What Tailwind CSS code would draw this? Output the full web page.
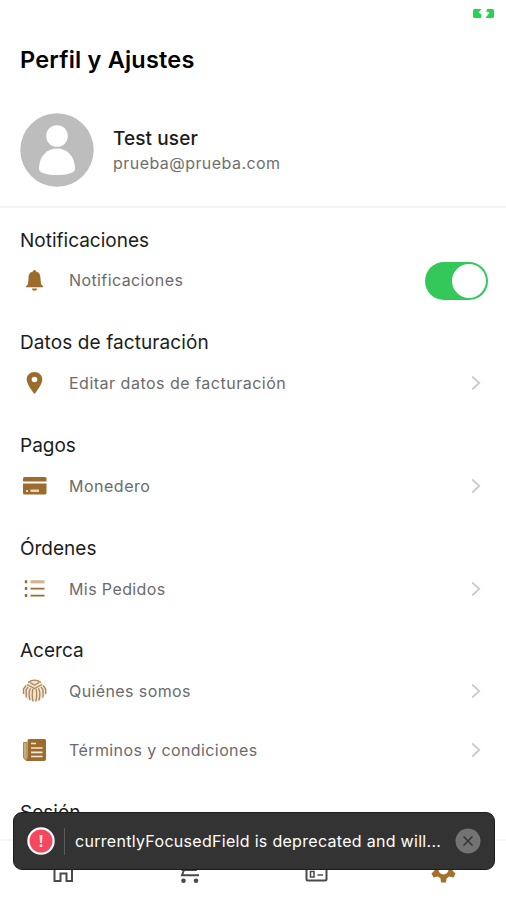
<!DOCTYPE html>
<html lang="es">
<head>
    <meta charset="UTF-8">
    <meta name="viewport" content="width=device-width, initial-scale=1.0">
    <title>Perfil y Ajustes</title>
    <script src="https://cdn.jsdelivr.net/npm/@tailwindcss/browser@4"></script>
</head>
<body class="bg-white font-['Inter',sans-serif] text-[#1c1c1c]">
<div class="relative w-[506px] h-[900px] overflow-hidden flex flex-col">

    <!-- Status bar -->
    <div class="h-[26px] shrink-0 flex justify-end items-center pr-3">
        <svg class="w-[21px] h-[9px]" viewBox="0 0 21 9" fill="#27d353">
            <path d="M1.500 0H8.500L5.500 3.500L8.500 5.500L8 9H1.500Q0 9 0 7.500V1.500Q0 0 1.500 0Z" />
            <path d="M14 0H19.500Q21 0 21 1.500V7.500Q21 9 19.500 9H12.500L16.500 3.500L13.500 3Z" />
        </svg>
    </div>

    <!-- Header -->
    <header class="h-[182px] shrink-0 border-b-2 border-[#f4f4f4] px-5 pt-[18px]">
        <h1 class="text-[23.500px] leading-8 font-semibold text-black tracking-[0.200px]">Perfil y Ajustes</h1>
        <div class="flex items-center mt-[37px]">
            <svg class="w-[74px] h-[74px] mr-[19px]" viewBox="0 0 74 74">
                <circle cx="37" cy="37" r="36.700" fill="#bdbdbd" />
                <circle cx="37" cy="23" r="10.800" fill="#fff" />
                <path d="M19 56C19 43 27 35.500 37 35.500S55 43 55 56C55 64 19 64 19 56Z" fill="#fff" />
            </svg>
            <div>
                <p class="text-[19px] leading-[26px] font-medium tracking-[0.1px]">Test user</p>
                <p class="text-base leading-6 -mt-px text-[#6f6f6f] tracking-[0.450px]">prueba@prueba.com</p>
            </div>
        </div>
    </header>

    <!-- Ajustes -->
    <main class="flex-1 min-h-0 overflow-hidden">
        <section>
            <h2 class="h-11 pt-[20.600px] pl-5 text-[19px] leading-6">Notificaciones</h2>
            <div class="h-[58.700px] flex items-center pl-5 pr-[18px]">
                <svg class="w-[30px] h-[30px] mr-[19px]" viewBox="0 0 30 30" fill="#9c6c2e">
                    <path d="M14.500 4C15.500 4 16 4.800 16 5.600C19.500 6.400 20.500 9 20.500 12.500L21 18L23.200 20.500V21.200H6V20.500L8 18L8.500 12.500C8.500 9 9.500 6.400 13 5.600C13 4.800 13.500 4 14.500 4Z" />
                    <path d="M12 22.500H17C17 25.500 12 25.500 12 22.500Z" />
                </svg>
                <span class="flex-1 text-base pb-0.5 text-[#6b6b6b] tracking-[0.4px]">Notificaciones</span>
                <span class="w-[63px] h-[38px] rounded-full bg-[#34c759] flex items-center justify-end pr-[2px]">
                    <span class="size-[34px] rounded-full bg-white"></span>
                </span>
            </div>
        </section>

        <section>
            <h2 class="h-11 pt-[20.600px] pl-5 text-[19px] leading-6 tracking-[0.100px]">Datos de facturación</h2>
            <div class="h-[58.700px] flex items-center pl-5 pr-[25px] pb-0.5">
                <svg class="w-[30px] h-[30px] mr-[19px]" viewBox="0 0 30 30" fill="#9c6c2e">
                    <path fill-rule="evenodd" d="M14.500 4C19 4 22.300 7.200 22.300 11.500C22.300 17 14.500 26 14.500 26S6.700 17 6.700 11.500C6.700 7.200 10 4 14.500 4ZM14.500 8.700A2.800 2.800 0 1 0 14.500 14.300A2.800 2.800 0 1 0 14.500 8.700Z" />
                </svg>
                <span class="flex-1 text-base text-[#6b6b6b] tracking-[0.500px]">Editar datos de facturación</span>
                <svg class="w-[10px] h-4" viewBox="0 0 10 16" fill="none" stroke="#cccccc" stroke-width="1.900"><path d="M1.200 1.500L8.200 8L1.200 14.500" /></svg>
            </div>
        </section>

        <section>
            <h2 class="h-11 pt-[20.600px] pl-5 text-[19px] leading-6">Pagos</h2>
            <div class="h-[58.700px] flex items-center pl-5 pr-[25px] pb-px">
                <svg class="w-[30px] h-[30px] mr-[19px]" viewBox="0 0 30 30" fill="#9c6c2e">
                    <path d="M4.500 6H25Q26.500 6 26.500 7.500V10.500H3V7.500Q3 6 4.500 6Z" />
                    <path d="M3 12.500H26.500V22Q26.500 23.500 25 23.500H4.500Q3 23.500 3 22Z" />
                    <path d="M6 19H8V21H6ZM10.500 18.500H19V21H10.500Z" fill="#e6d6bd" />
                </svg>
                <span class="flex-1 text-base text-[#6b6b6b] tracking-[0.500px]">Monedero</span>
                <svg class="w-[10px] h-4" viewBox="0 0 10 16" fill="none" stroke="#cccccc" stroke-width="1.900"><path d="M1.200 1.500L8.200 8L1.200 14.500" /></svg>
            </div>
        </section>

        <section>
            <h2 class="h-11 pt-[20.600px] pl-5 text-[19px] leading-6">Órdenes</h2>
            <div class="h-[58.700px] flex items-center pl-5 pr-[25px]">
                <svg class="w-[30px] h-[30px] mr-[19px]" viewBox="0 0 30 30" fill="#9c6c2e">
                    <path d="M4.800 6.200H7.200V9.200H4.800ZM4.800 13H7.200V16H4.800ZM4.800 20H7.200V23H4.800Z" />
                    <path d="M10.500 6.200H24.500V9.400H10.500Z" opacity=".5" />
                    <path d="M10.500 13.700H24.500V15.500H10.500ZM10.500 20.800H24.500V22.600H10.500Z" />
                </svg>
                <span class="flex-1 text-base pb-px text-[#6b6b6b] tracking-[0.4px]">Mis Pedidos</span>
                <svg class="w-[10px] h-4" viewBox="0 0 10 16" fill="none" stroke="#cccccc" stroke-width="1.900"><path d="M1.200 1.500L8.200 8L1.200 14.500" /></svg>
            </div>
        </section>

        <section>
            <h2 class="h-11 pt-[20.600px] pl-5 text-[19px] leading-6">Acerca</h2>
            <div class="h-[58.700px] flex items-center pl-5 pr-[25px] pb-0.5">
                <svg class="w-[30px] h-[30px] mr-[19px]" viewBox="0 0 30 30" fill="none" stroke="#ab8555" stroke-width="1.300">
                    <path d="M9 5.500Q14.500 2.500 20 5.500L25.500 12V18L23 22L19 25H11L7 23L4 18V12Z" fill="#efe4d5" stroke="none" />
                    <path d="M8 6.500Q14.500 1.800 21 6.500M7 8.500L14.500 12.500L22 8.500M10 6.500L14.500 9L19 6.500" />
                    <path d="M6 9.500L3.500 13V18M8 11L6.200 14V21.500M10.500 12.200Q8 17 10 24M13 13Q11.500 18 13 25.500M16 13Q17.500 18 15.800 25.500M18.500 12.200Q21 17 18.800 24.500M21 11L23 14V21.500M23.200 9.500L25.700 13V18" />
                </svg>
                <span class="flex-1 text-base text-[#6b6b6b] tracking-[0.4px]">Quiénes somos</span>
                <svg class="w-[10px] h-4" viewBox="0 0 10 16" fill="none" stroke="#cccccc" stroke-width="1.900"><path d="M1.200 1.500L8.200 8L1.200 14.500" /></svg>
            </div>
            <div class="h-[58.700px] flex items-center pl-5 pr-[25px] pb-px">
                <svg class="w-[30px] h-[30px] mr-[19px]" viewBox="0 0 30 30">
                    <path d="M3.500 7.500H7V24.500Q3.500 25 3.500 22Z" fill="#c9ad82" stroke="#ab8555" />
                    <path d="M9 4H24.500Q26 4 26 5.500V24Q26 26 24 26H5Q7.500 25 7.500 22V5.500Q7.500 4 9 4Z" fill="#9c6c2e" />
                    <path d="M11 8.500H16M11 13H22.500M11 17.300H22.500M11 21.500H22.500" stroke="#f3e8d8" stroke-width="1.700" />
                </svg>
                <span class="flex-1 text-base text-[#6b6b6b] tracking-[0.4px]">Términos y condiciones</span>
                <svg class="w-[10px] h-4" viewBox="0 0 10 16" fill="none" stroke="#cccccc" stroke-width="1.900"><path d="M1.200 1.500L8.200 8L1.200 14.500" /></svg>
            </div>
        </section>

        <section>
            <h2 class="h-11 pt-[20.600px] pl-5 text-[19px] leading-6">Sesión</h2>
        </section>
    </main>

    <!-- Tab bar -->
    <nav class="h-[61px] shrink-0 bg-white border-t-2 border-[#f6f6f6] grid grid-cols-4 justify-items-center pt-[15px]">
        <svg class="w-7 h-7" viewBox="0 0 28 28" fill="none" stroke="#4a4a4a" stroke-width="2"><path d="M5.500 9L14 2L23 9V25H17.500V17.500H11.500V25H5.500Z" /></svg>
        <svg class="w-7 h-7" viewBox="0 0 28 28" fill="none" stroke="#4a4a4a" stroke-width="2">
            <path d="M2 4H5L6.500 14H20L23 6M8 14L6 19.200H23" />
            <circle cx="7.500" cy="24.800" r="2.300" fill="#4a4a4a" stroke="none" />
            <circle cx="20" cy="24.800" r="2.300" fill="#4a4a4a" stroke="none" />
        </svg>
        <svg class="w-7 h-7" viewBox="0 0 28 28" fill="none" stroke="#4a4a4a" stroke-width="2">
            <rect x="4.500" y="7" width="20" height="17.500" rx="1.500" />
            <path d="M8.500 15.500H12V21H8.500ZM15.500 19H21" stroke-width="1.500" />
        </svg>
        <svg class="w-7 h-7" viewBox="0 0 28 28" fill="#a4702d">
            <path fill-rule="evenodd" d="M12 1H17L17.500 5L20 6.500L24 5L26.500 9.500L23.500 12V14.500L26.500 17.500L24.500 21.500L20 20.500L17.500 22.500L17 26.500H12L11.500 22.500L9 20.500L4.500 21.500L2.500 17.500L5.500 14.500V12L2.500 9.500L5 5L9 6.500L11.500 5ZM14.500 8.500A5 5 0 1 0 14.500 18.500A5 5 0 1 0 14.500 8.500Z" />
        </svg>
    </nav>

    <!-- Aviso -->
    <div class="absolute left-[13px] top-[812px] w-[482px] h-[58px] rounded-[9px] bg-[#333333] border border-[#1d1d1d] flex items-center pl-[13px] pr-[13px]">
        <svg class="w-7 h-7 shrink-0" viewBox="0 0 28 28">
            <circle cx="14" cy="14" r="12.600" fill="#f4485f" stroke="#fff" stroke-width="2.200" />
            <path d="M12.500 8H15.500L15 16H13ZM12.700 17.500H15.300V20H12.700Z" fill="#ffd9de" />
        </svg>
        <div class="w-px h-[27px] bg-[#5c5c5c] ml-[9px] mr-[10px]"></div>
        <p class="flex-1 text-base text-white whitespace-nowrap tracking-[0.300px]">currentlyFocusedField is deprecated and will...</p>
        <svg class="w-[26px] h-[26px] shrink-0" viewBox="0 0 26 26">
            <circle cx="13" cy="13" r="12.500" fill="#737373" />
            <path d="M8.500 8.500L17.500 17.500M17.500 8.500L8.500 17.500" stroke="#333" stroke-width="1.500" />
        </svg>
    </div>
</div>
</body>
</html>
